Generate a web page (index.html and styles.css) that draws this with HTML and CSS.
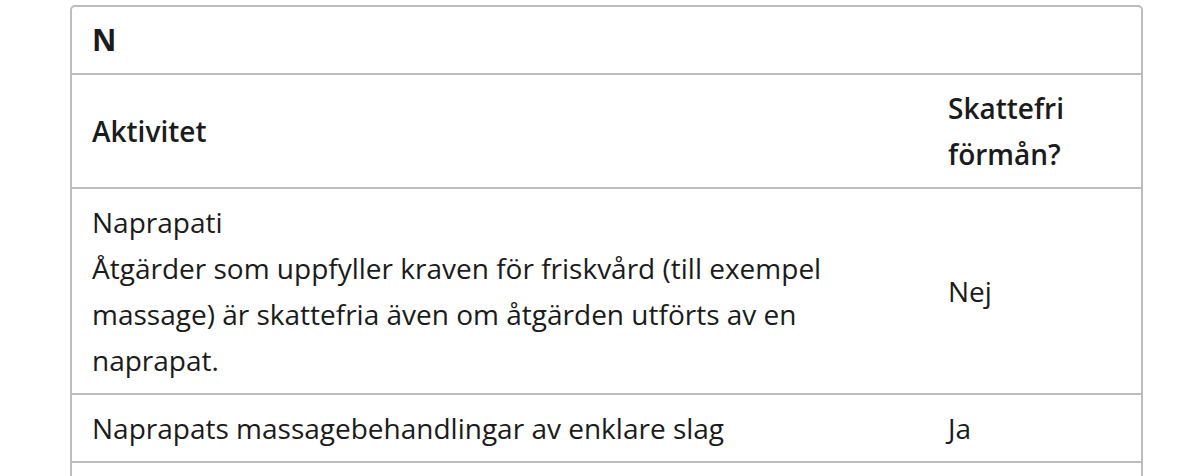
FILE: index.html
```html
<!DOCTYPE html>
<html lang="sv">
<head>
<meta charset="utf-8">
<link rel="stylesheet" href="styles.css">
</head>
<body>
<div class="page">
  <section class="card">
    <h2 class="card-title">N</h2>
    <table class="benefits">
      <thead>
        <tr>
          <th class="col-activity">Aktivitet</th>
          <th class="col-free">Skattefri förmån?</th>
        </tr>
      </thead>
      <tbody>
        <tr>
          <td>Naprapati<br>Åtgärder som uppfyller kraven för friskvård (till exempel massage) är skattefria även om åtgärden utförts av en naprapat.</td>
          <td>Nej</td>
        </tr>
        <tr>
          <td>Naprapats massagebehandlingar av enklare slag</td>
          <td>Ja</td>
        </tr>
        <tr class="spacer-row">
          <td></td>
          <td></td>
        </tr>
      </tbody>
    </table>
  </section>
</div>
</body>
</html>
```

FILE: styles.css
```css
html, body {
  margin: 0;
  padding: 0;
  background: #ffffff;
}

body {
  font-family: "Open Sans", "Noto Sans", sans-serif;
  color: #1b1b1b;
  font-size: 28px;
  line-height: 46px;
}

.page {
  padding: 5px 37px 0 70px;
}

.card {
  border: 2px solid #bdbdbd;
  border-radius: 5px;
  overflow: hidden;
}

.card-title {
  margin: 0;
  padding: 10px 20px;
  font-size: 30px;
  font-weight: 700;
  line-height: 46px;
  border-bottom: 2px solid #bdbdbd;
}

.benefits {
  width: 100%;
  border-collapse: collapse;
}

.benefits th,
.benefits td {
  padding: 10px 20px;
  text-align: left;
  vertical-align: middle;
}

.benefits th {
  font-weight: 600;
}

.benefits tr + tr td,
.benefits tbody tr:first-child td {
  border-top: 2px solid #bdbdbd;
}

.spacer-row td {
  height: 46px;
}

.col-free {
  width: 173px;
}
```
